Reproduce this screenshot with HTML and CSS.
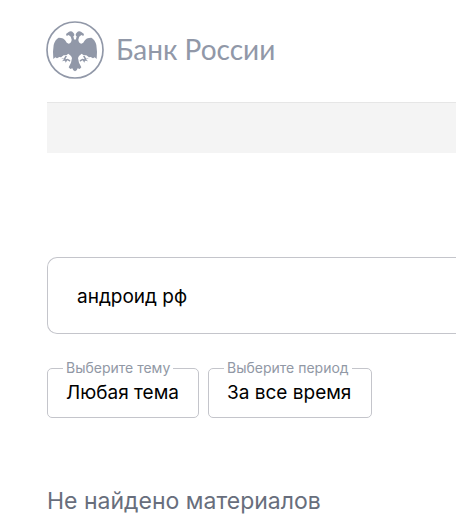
FILE: index.html
```html
<!DOCTYPE html>
<html lang="ru">
<head>
    <meta charset="UTF-8">
    <meta name="viewport" content="width=device-width, initial-scale=1.0">
    <title>Поиск | Банк России</title>
    <link rel="stylesheet" href="styles.css">
</head>
<body>
    <header class="header">
        <a class="logo" href="/">
            <svg class="logo-icon" viewBox="0 0 174 174" aria-hidden="true">
                <circle cx="87" cy="87" r="84" fill="none" stroke="currentColor" stroke-width="5"/>
                <g id="eagle-half" fill="currentColor">
                    <path d="M88 58 L84 54 L82 46 Q88 42 82 35 Q76 28 69 32 L60 39 L62 45 L68 42 Q76 46 77 56 Q76 66 68 68 Q61 67 59 60 Q54 50 38 50 Q27 56 23 72 L21 92 L22 114 L28 109 L33 112 L40 108 L45 109 L53 103 L61 103 L67 98 L75 105 L78 111 L75 125 L68 139 L73 144 L79 142 L82 148 L88 151 Z"/>
                    <path d="M45 110 L53 113 L58 105 L63 105 L58 115 L65 113 L73 118 L72 122 L64 118 L59 125 L57 119 L47 121 L54 116 Z"/>
                </g>
                <use href="#eagle-half" transform="matrix(-1 0 0 1 174 0)"/>
            </svg>
            <span class="logo-text">Банк России</span>
        </a>
    </header>
    <main class="content">
        <div class="banner"></div>
        <form class="search">
            <input type="text" class="search-input" name="text" value="андроид рф" aria-label="Поиск по сайту">
            <div class="filters">
                <div class="filter">
                    <label for="theme">Выберите тему</label>
                    <select id="theme" name="theme">
                        <option>Любая тема</option>
                    </select>
                </div>
                <div class="filter">
                    <label for="period">Выберите период</label>
                    <select id="period" name="period">
                        <option>За все время</option>
                    </select>
                </div>
            </div>
        </form>
        <p class="result">Не найдено материалов</p>
    </main>
</body>
</html>
```
FILE: styles.css
```css
:root {
    --logo-color: #9198a8;
    --border-color: #c4c5cb;
    --label-color: #9198a5;
    --result-color: #686e7c;
}

* {
    box-sizing: border-box;
}

body {
    margin: 0;
    padding-left: 47px;
    background: white;
    color: black;
    font-family: Inter, "Noto Sans", sans-serif;
    font-size: 19px;
    overflow-x: hidden;
}

.header {
    padding: 21px 0 23px;
}

.logo {
    display: flex;
    align-items: center;
    gap: 12px;
    color: var(--logo-color);
    text-decoration: none;
}

.logo-icon {
    width: 58px;
    height: 58px;
    margin-left: -1px;
}

.logo-text {
    padding-bottom: 2px;
    font-family: Lato, sans-serif;
    font-size: 28px;
    line-height: 36px;
}

.banner {
    height: 51px;
    border-top: 1px solid #e6e6e6;
    background: #f4f4f4;
}

.search {
    margin-top: 104px;
}

.search-input {
    display: block;
    width: 100%;
    height: 77px;
    padding: 2px 29px 0;
    border: 1px solid var(--border-color);
    border-right: 0;
    border-radius: 10px 0 0 10px;
    background: white;
    color: black;
    font: inherit;
}

.filters {
    display: flex;
    gap: 9px;
    margin-top: 34px;
}

.filter {
    position: relative;
}

.filter label {
    position: absolute;
    top: -8px;
    left: 16px;
    padding: 0 3px;
    background: white;
    color: var(--label-color);
    font-size: 14px;
    line-height: 16px;
    white-space: nowrap;
}

.filter select {
    display: block;
    height: 50px;
    padding: 0 19px 2px 18px;
    border: 1px solid var(--border-color);
    border-radius: 5px;
    background: white;
    color: black;
    font: inherit;
    appearance: none;
}

.result {
    margin: 67px 0 0;
    color: var(--result-color);
    font-size: 23px;
    line-height: 32px;
}
```
